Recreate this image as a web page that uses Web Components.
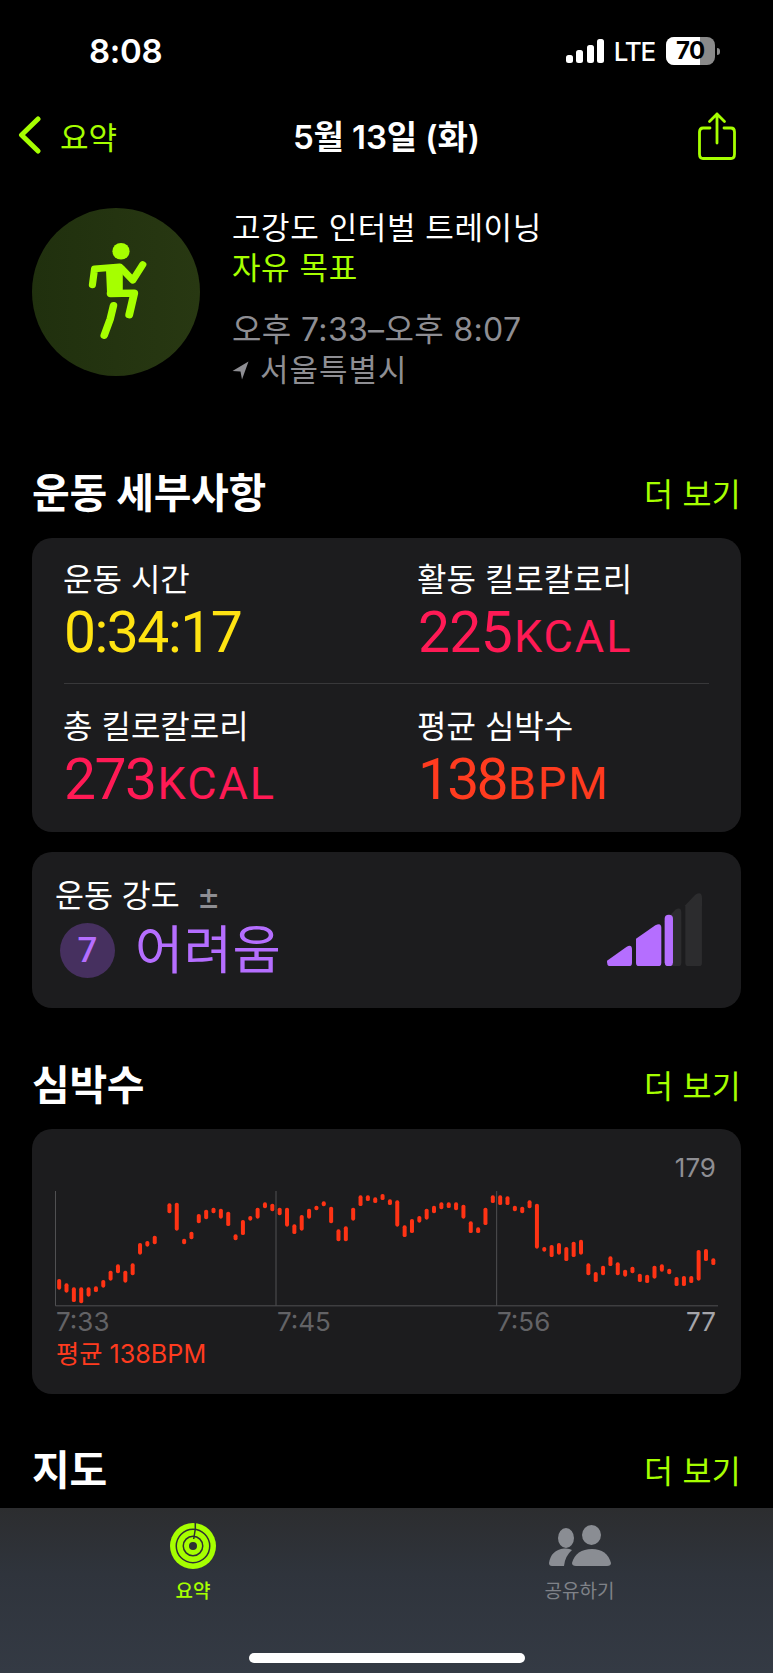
<!DOCTYPE html>
<html lang="ko">
<head>
<meta charset="utf-8">
<title>운동 세부사항</title>
<style>
    html,body{margin:0;background:#000;}
    body{font-family:Inter,"Noto Sans CJK KR",sans-serif;color:#fff;}
</style>
</head>
<body>
<activity-page>
    <status-strip></status-strip>
    <nav-strip></nav-strip>
    <workout-header></workout-header>
    <section-head title-text="운동 세부사항" gap="79"></section-head>
    <details-card></details-card>
    <effort-card></effort-card>
    <section-head title-text="심박수" gap="51"></section-head>
    <heart-card></heart-card>
    <section-head title-text="지도" gap="50"></section-head>
    <tab-strip slot="tabs"></tab-strip>
</activity-page>

<script>
const KR = 'Inter,"Noto Sans CJK KR",sans-serif';
const NUM = 'Roboto,"Noto Sans CJK KR",sans-serif';

class ActivityPage extends HTMLElement {
    constructor() {
        super();
        this.attachShadow({ mode: 'open' });
        this.shadowRoot.innerHTML = `
        <style>
            :host{display:flex;flex-direction:column;width:773px;height:1673px;overflow:hidden;background:#000;}
            .main{flex:1;display:flex;flex-direction:column;min-height:0;}
        </style>
        <div class="main"><slot></slot></div>
        <slot name="tabs"></slot>`;
    }
}

class StatusStrip extends HTMLElement {
    constructor() {
        super();
        this.attachShadow({ mode: 'open' });
        this.shadowRoot.innerHTML = `
        <style>
            :host{display:flex;align-items:center;justify-content:space-between;height:102px;padding:0 53px 0 89px;font-family:${KR};}
            .time{font-size:33px;font-weight:600;letter-spacing:-.3px;}
            .right{display:flex;align-items:center;}
            .lte{font-size:26px;font-weight:500;margin:0 11px 0 10px;letter-spacing:-1.2px;}
            .batt{position:relative;width:49px;height:28px;border-radius:8px;overflow:hidden;background:#8a8a8a;}
            .fill{position:absolute;left:0;top:0;bottom:0;width:34px;background:#fff;}
            .pct{position:absolute;left:10px;top:0;line-height:28px;font-size:24px;font-weight:700;color:#000;letter-spacing:-.5px;}
            .nub{width:3px;height:7px;background:#8a8a8a;border-radius:0 3px 3px 0;margin-left:2px;}
        </style>
        <span class="time">8:08</span>
        <div class="right">
            <svg width="38" height="24" viewBox="0 0 38 24"><g fill="#fff">
                <rect x="0" y="16" width="7" height="8" rx="2.5"/>
                <rect x="10" y="11" width="7" height="13" rx="2.5"/>
                <rect x="21" y="6" width="7" height="18" rx="2.5"/>
                <rect x="31" y="0" width="7" height="24" rx="2.5"/>
            </g></svg>
            <span class="lte">LTE</span>
            <div class="batt"><div class="fill"></div><span class="pct">70</span></div>
            <div class="nub"></div>
        </div>`;
    }
}

class NavStrip extends HTMLElement {
    constructor() {
        super();
        this.attachShadow({ mode: 'open' });
        this.shadowRoot.innerHTML = `
        <style>
            :host{display:grid;grid-template-columns:1fr auto 1fr;align-items:center;height:66px;padding:0 18px;font-family:${KR};}
            .back{display:flex;align-items:center;gap:19px;color:#a6ff00;font-size:31px;}
            .title{font-size:33px;font-weight:600;letter-spacing:-.1px;}
            .share{justify-self:end;display:flex;margin:2px 19px 0 0;}
        </style>
        <div class="back">
            <svg width="23" height="38" viewBox="0 0 23 38"><path d="M20 3 L3.5 19 L20 35" fill="none" stroke="#a6ff00" stroke-width="5" stroke-linecap="round" stroke-linejoin="round"/></svg>
            <span>요약</span>
        </div>
        <span class="title">5월 13일 (화)</span>
        <div class="share">
            <svg width="38" height="48" viewBox="0 0 38 48" fill="none" stroke="#a6ff00" stroke-width="2.8" stroke-linecap="round" stroke-linejoin="round">
                <path d="M12 16 H5 Q1.5 16 1.5 20 V42 Q1.5 46.5 5 46.5 H33 Q36.5 46.5 36.5 42 V20 Q36.5 16 33 16 H26"/>
                <path d="M19 31 V2 M11.5 9.5 L19 2 L26.5 9.5"/>
            </svg>
        </div>`;
    }
}

class WorkoutHeader extends HTMLElement {
    constructor() {
        super();
        this.attachShadow({ mode: 'open' });
        this.shadowRoot.innerHTML = `
        <style>
            :host{display:flex;gap:32px;margin-top:40px;padding-left:32px;height:180px;font-family:${KR};}
            .badge{width:168px;height:168px;flex:none;}
            .info{font-size:31px;line-height:40px;letter-spacing:.6px;white-space:nowrap;}
            .goal{color:#a6ff00;}
            .time{margin-top:22px;color:#8e8e93;font-size:32px;letter-spacing:.35px;}
            .place{color:#8e8e93;display:flex;align-items:center;gap:11px;letter-spacing:1px;}
        </style>
        <svg class="badge" viewBox="90 55 470 505" preserveAspectRatio="none">
            <defs><linearGradient id="disc"><stop offset="0" stop-color="#20300e"/><stop offset="1" stop-color="#283812"/></linearGradient></defs>
            <ellipse cx="325" cy="307.5" rx="235" ry="252.5" fill="url(#disc)"/>
            <g fill="#a6ff00" stroke="#a6ff00" stroke-linecap="round" stroke-linejoin="round">
                <ellipse cx="339" cy="185" rx="24" ry="25" stroke="none"/>
                <path d="M303 240 L338 234 L338 300 L306 312 Z" stroke-width="12"/>
                <path d="M335 232 L265 238 L259 286" fill="none" stroke-width="20"/>
                <path d="M340 236 L372 272 L400 225" fill="none" stroke-width="20"/>
                <path d="M310 312 L376 311 L362 376" fill="none" stroke-width="22"/>
                <path d="M318 348 L309 388 L292 438" fill="none" stroke-width="21"/>
            </g>
        </svg>
        <div class="info">
            <div>고강도 인터벌 트레이닝</div>
            <div class="goal">자유 목표</div>
            <div class="time">오후 7:33–오후 8:07</div>
            <div class="place">
                <svg width="17" height="19" viewBox="0 0 17 19"><path d="M16.5 .5 L0.5 10 L8.5 10.5 L10 18.5 Z" fill="#8e8e93"/></svg>
                <span>서울특별시</span>
            </div>
        </div>`;
    }
}

class SectionHead extends HTMLElement {
    constructor() {
        super();
        this.attachShadow({ mode: 'open' });
        this.shadowRoot.innerHTML = `
        <style>
            :host{display:flex;align-items:center;justify-content:space-between;height:50px;padding:0 32px;font-family:${KR};}
            .t{font-size:41px;font-weight:700;letter-spacing:-.3px;margin-top:-5px;}
            .more{color:#a6ff00;font-size:31.500px;letter-spacing:.3px;}
        </style>
        <span class="t"></span><span class="more">더 보기</span>`;
    }
    connectedCallback() {
        this.shadowRoot.querySelector('.t').textContent = this.getAttribute('title-text');
        this.style.marginTop = this.getAttribute('gap') + 'px';
    }
}

class StatItem extends HTMLElement {
    constructor() {
        super();
        this.attachShadow({ mode: 'open' });
        this.shadowRoot.innerHTML = `
        <style>
            :host{display:block;font-family:${KR};}
            .label{font-size:32px;line-height:40px;white-space:nowrap;}
            .value{font-family:${NUM};font-size:57px;line-height:60px;margin-top:3px;padding-left:1px;white-space:nowrap;color:var(--c);letter-spacing:var(--track,-.7px);}
            small{font-size:45px;letter-spacing:2px;margin-left:2px;}
        </style>
        <div class="label"><slot name="label"></slot></div>
        <div class="value"><slot></slot><small></small></div>`;
    }
    connectedCallback() {
        this.shadowRoot.querySelector('small').textContent = this.getAttribute('unit') || '';
        this.style.setProperty('--c', this.getAttribute('color'));
        if (this.hasAttribute('track')) this.style.setProperty('--track', this.getAttribute('track'));
    }
}

class DetailsCard extends HTMLElement {
    constructor() {
        super();
        this.attachShadow({ mode: 'open' });
        this.shadowRoot.innerHTML = `
        <style>
            :host{display:block;margin:21px 32px 0;height:294px;background:#1c1c1e;border-radius:20px;box-sizing:border-box;}
            .row{display:grid;grid-template-columns:355px 1fr;margin:0 32px;}
            .row>*:first-child{margin-left:-1px;}
            .row>*:last-child{margin-left:-2px;}
            .one{padding-top:22px;height:146px;box-sizing:border-box;border-bottom:1px solid #38383a;}
            .two{padding-top:23px;}
        </style>
        <div class="row one">
            <stat-item color="#ffe312" track="-1.500px"><span slot="label">운동 시간</span>0:34:17</stat-item>
            <stat-item color="#ff1a55" unit="KCAL"><span slot="label">활동 킬로칼로리</span>225</stat-item>
        </div>
        <div class="row two">
            <stat-item color="#ff1a55" unit="KCAL" track="-1.500px"><span slot="label">총 킬로칼로리</span>273</stat-item>
            <stat-item color="#ff3b1f" unit="BPM" track="-2.800px"><span slot="label">평균 심박수</span>138</stat-item>
        </div>`;
    }
}

class EffortCard extends HTMLElement {
    constructor() {
        super();
        this.attachShadow({ mode: 'open' });
        this.shadowRoot.innerHTML = `
        <style>
            :host{display:flex;justify-content:space-between;margin:20px 32px 0;height:156px;background:#1c1c1e;border-radius:20px;box-sizing:border-box;padding:24px 39px 0 23px;font-family:${KR};}
            .label{font-size:31.500px;line-height:40px;display:flex;align-items:center;gap:17px;}
            .pm{color:#8e8e93;font-size:36px;font-weight:400;}
            .level{display:flex;align-items:center;gap:20px;margin:7px 0 0 5px;}
            .num{width:55px;height:55px;border-radius:50%;background:#46305f;color:#b56eff;font-size:35px;font-weight:500;display:flex;align-items:center;justify-content:center;font-family:${NUM};}
            .word{font-size:52.500px;line-height:55px;color:#b56eff;letter-spacing:.5px;}
            svg{margin-top:17px;}
        </style>
        <div>
            <div class="label"><span>운동 강도</span><span class="pm">±</span></div>
            <div class="level"><span class="num">7</span><span class="word">어려움</span></div>
        </div>
        <svg width="95" height="73.300" viewBox="20 25 285 220">
            <path d="M193 110 L225 75 Q243 65 243 85 V235 Q243 245 233 245 H203 Q193 245 193 235 Z" fill="#2c2c2e"/>
            <path d="M255 62 L285 30 Q305 18 305 40 V235 Q305 245 295 245 H265 Q255 245 255 235 Z" fill="#2c2c2e"/>
            <path d="M20 228 L78 187 Q95 177 95 195 V235 Q95 245 85 245 H30 Q20 245 20 232 Z" fill="#b56eff"/>
            <path d="M107 162 L165 122 Q183 112 183 130 V235 Q183 245 173 245 H117 Q107 245 107 235 Z" fill="#b56eff"/>
            <rect x="193" y="90" width="25" height="155" rx="12" fill="#b56eff"/>
        </svg>`;
    }
}

// bars: top and bottom as read off the reference, in thirds of a pixel
const HEART_BARS = [[417,449],[430,458],[442,486],[442,490],[442,470],[439,456],[420,443],[392,422],[373,400],[392,428],[370,406],[309,344],[303,320],[287,313],null,
    [190,220],[188,272],[296,313],[275,298],[222,250],[209,238],[203,220],[206,236],[215,258],[283,301],[240,285],[228,242],[203,236],[187,205],[191,214],
    [203,226],[203,260],[253,282],[225,272],[206,236],[197,211],[184,199],[200,250],[268,304],[259,304],[203,242],[166,198],[166,183],[172,189],[162,180],[178,195],
    [181,260],[256,291],[237,279],[228,248],[206,239],[197,220],[187,208],[187,204],[187,211],[194,236],[244,279],[262,279],[203,255],[166,189],[166,195],[169,195],
    [197,214],[200,220],[181,205],[191,326],[321,335],[315,351],[309,344],[321,363],[305,351],[299,344],[370,406],[396,426],[377,406],[349,378],[367,406],[389,410],
    [380,400],[401,426],[404,429],[377,416],[373,395],[386,403],[411,438],[408,438],[408,429],[330,422],[327,363],[355,375]];

class HeartCard extends HTMLElement {
    constructor() {
        super();
        this.attachShadow({ mode: 'open' });
        const bars = HEART_BARS.map((b, i) => b
            ? `<rect x="${(81.5 + i * 22.05).toFixed(1)}" y="${b[0]}" width="12" height="${b[1] - b[0]}" rx="5.500"/>`
            : '').join('');
        this.shadowRoot.innerHTML = `
        <style>
            :host{display:block;margin:20px 32px 0;height:265px;background:#1c1c1e;border-radius:20px;box-sizing:border-box;padding:26px 23px 0;font-family:${KR};}
            .max{text-align:right;padding-right:2px;font-size:26px;line-height:26px;color:#8e8e93;}
            svg{display:block;margin-top:10px;}
            .ticks{display:grid;grid-template-columns:221px 220px 1fr auto;font-size:26px;line-height:30px;color:#636366;padding:0 2px 0 1px;}
            .end{color:#a5a5aa;}
            .avg{color:#ff3b1f;font-size:25.200px;line-height:30px;margin-top:2px;padding-left:1px;}
        </style>
        <div class="max">179</div>
        <svg width="663" height="116" viewBox="75 153 1989 348">
            <g stroke="#505052" stroke-width="3" fill="none">
                <path d="M76.500 153 V497.500 H2064"/>
                <path d="M738 153 V497"/>
                <path d="M1400 153 V497"/>
            </g>
            <g fill="#ff3314">${bars}</g>
        </svg>
        <div class="ticks"><span>7:33</span><span>7:45</span><span>7:56</span><span class="end">77</span></div>
        <div class="avg">평균 138BPM</div>`;
    }
}

class TabStrip extends HTMLElement {
    constructor() {
        super();
        this.attachShadow({ mode: 'open' });
        this.shadowRoot.innerHTML = `
        <style>
            :host{display:block;height:165px;box-sizing:border-box;padding-top:15px;background:linear-gradient(#2c2d2f,#2f343c 40%,#343a44);font-family:${KR};}
            .tabs{display:grid;grid-template-columns:386px 1fr;}
            .tab{display:flex;flex-direction:column;align-items:center;font-size:19px;line-height:28px;}
            .tab svg{display:block;height:46px;margin-bottom:9px;}
            .on{color:#a6ff00;font-weight:500;}
            .off{color:#7f8288;}
            .home{width:276px;height:10px;border-radius:5px;background:#fff;margin:47px auto 0 249px;}
        </style>
        <div class="tabs">
            <div class="tab on">
                <svg width="46" height="46" viewBox="0 0 46 46" fill="none" stroke="#a6ff00">
                    <circle cx="23" cy="23" r="23" fill="#a6ff00" stroke="none"/>
                    <circle cx="23" cy="23" r="16.750" stroke="#2e3033" stroke-width="1.500"/>
                    <circle cx="23" cy="23" r="9.750" stroke="#2e3033" stroke-width="1.500"/>
                    <circle cx="23" cy="23" r="4" fill="#2e3033" stroke="none"/>
                    <path d="M25.300 0 V6 L23.700 16" stroke="#2e3033" stroke-width="1.500"/>
                </svg>
                <span>요약</span>
            </div>
            <div class="tab off">
                <svg width="62" height="46" viewBox="0 0 62 46" fill="#8a8d93">
                    <ellipse cx="17" cy="15" rx="8" ry="10"/>
                    <ellipse cx="42.500" cy="12" rx="9.500" ry="10"/>
                    <path d="M0 40 Q2 27 15 25.500 Q20 25 23 27 Q16 33 15 43 H3 Q0 43 0 40 Z"/>
                    <path d="M23 40 Q27 26 43 26 Q58 26 62 40 Q62 43 58 43 H27 Q23 43 23 40 Z"/>
                </svg>
                <span>공유하기</span>
            </div>
        </div>
        <div class="home"></div>`;
    }
}

customElements.define('activity-page', ActivityPage);
customElements.define('status-strip', StatusStrip);
customElements.define('nav-strip', NavStrip);
customElements.define('workout-header', WorkoutHeader);
customElements.define('section-head', SectionHead);
customElements.define('stat-item', StatItem);
customElements.define('details-card', DetailsCard);
customElements.define('effort-card', EffortCard);
customElements.define('heart-card', HeartCard);
customElements.define('tab-strip', TabStrip);
</script>
</body>
</html>
